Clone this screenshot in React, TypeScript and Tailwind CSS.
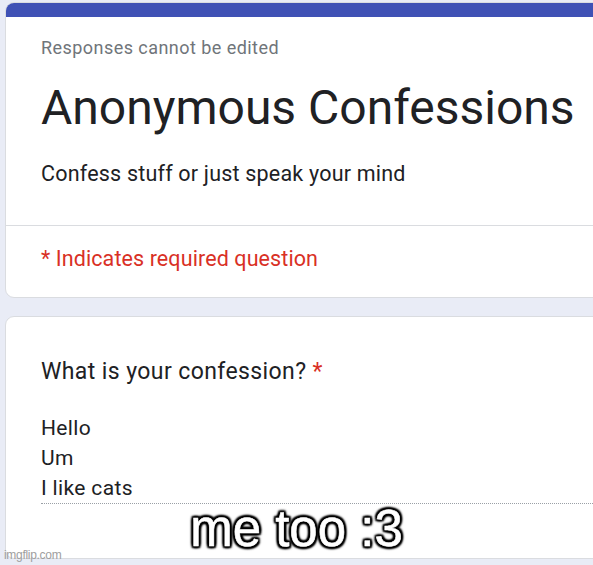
export default function App() {
  return (
    <div className="relative h-[565px] w-[593px] overflow-hidden bg-[#e9ecf6] font-['Roboto',sans-serif]">
      <div className="ml-[5px] mt-[2px] w-[640px] overflow-hidden rounded-[9px] border border-[#dadce0] bg-white">
        <div className="h-[14px] bg-[#3f51b5]" />
        <div className="px-[35px] pb-[37px] pt-[19px]">
          <p className="text-[18px] leading-6 tracking-[0.45px] text-[#70757a]">Responses cannot be edited</p>
          <h1 className="mt-[20px] text-[48px] leading-[56px] text-[#202124]">Anonymous Confessions</h1>
          <p className="mt-[24px] text-[21.5px] leading-7 tracking-[0.2px] text-[#202124]">Confess stuff or just speak your mind</p>
        </div>
        <div className="border-t border-[#dadce0] px-[35px] pb-[24px] pt-[19px]">
          <p className="text-[21.5px] leading-7 tracking-[0.1px] text-[#d93025]">* Indicates required question</p>
        </div>
      </div>

      <div className="ml-[5px] mt-[18px] w-[640px] rounded-[9px] border border-[#dadce0] bg-white px-[35px] pb-[54px] pt-[40px]">
        <p className="text-[23px] leading-[30px] tracking-[0.4px] text-[#202124]">
          What is your confession? <span className="text-[#d93025]">*</span>
        </p>
        <div className="mt-[26px] border-b border-dotted border-[#9aa0a6] text-[21px] leading-[30px] tracking-[0.35px] text-[#202124]">
          <p>Hello</p>
          <p>Um</p>
          <p>I like cats</p>
        </div>
      </div>

      {/* meme caption */}
      <p className="absolute left-0 right-0 top-[500px] text-center font-['Liberation_Sans',Arial,sans-serif] text-[51px] leading-[58px] text-white [-webkit-text-stroke:0.6px_#fff] [text-shadow:0_0_3px_#000,0_0_4px_#000,2px_2px_2px_#000,-2px_-2px_2px_#000,2px_-2px_2px_#000,-2px_2px_2px_#000,0_2px_2px_#000,0_-2px_2px_#000,2px_0_2px_#000,-2px_0_2px_#000]">
        me too :3
      </p>
      <p className="absolute bottom-[3px] left-[4px] font-['Liberation_Sans',Arial,sans-serif] text-[12px] leading-[14px] tracking-[-0.3px] text-[#9e9e9e]">
        imgflip.com
      </p>
    </div>
  );
}
